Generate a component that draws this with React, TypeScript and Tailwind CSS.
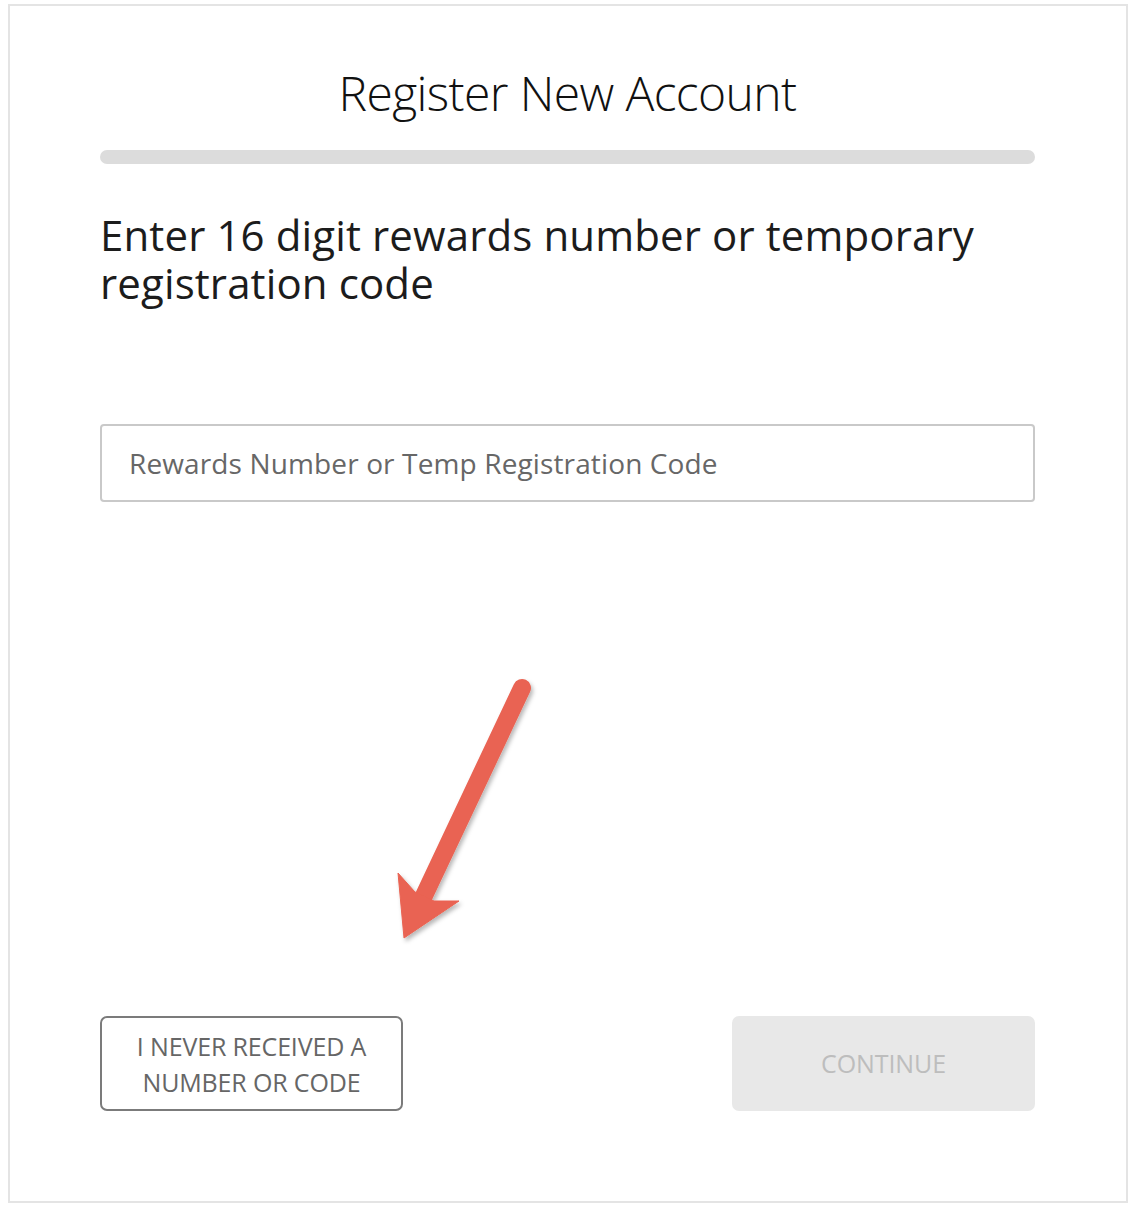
import React from "react";

const font = { fontFamily: '"Open Sans", "Noto Sans", sans-serif' };

function Arrow() {
  return (
    <svg
      className="absolute left-0 top-0 pointer-events-none"
      width={1134}
      height={1210}
      viewBox="0 0 1134 1210"
    >
      <defs>
        <filter id="arrowShadow" x="-20%" y="-20%" width="140%" height="140%">
          <feDropShadow dx="2" dy="3" stdDeviation="2" floodColor="#000" floodOpacity="0.28" />
        </filter>
      </defs>
      <g filter="url(#arrowShadow)" fill="#e96352" stroke="#e96352">
        <line x1="522" y1="688" x2="422" y2="900" strokeWidth="18" strokeLinecap="round" />
        <polygon
          points="398,873 415,892 434,901 459,901 404,938"
          strokeWidth="1"
          strokeLinejoin="miter"
        />
      </g>
    </svg>
  );
}

export default function App() {
  return (
    <div className="relative w-[1134px] h-[1210px] bg-white" style={font}>
      <div className="absolute left-[8px] top-[4px] w-[1120px] h-[1199px] border-2 border-[#e4e4e4] bg-white" />
      <div className="relative flex flex-col pl-[100px] pr-[99px] pt-[63px]">
        {/* Title */}
        <h1 className="text-center text-[#111] font-light text-[48px] leading-[60px] tracking-[-0.6px]">
          Register New Account
        </h1>

        {/* progress bar */}
        <div className="mt-[27px] h-[14px] w-full rounded-full bg-[#dcdcdc]" />

        <h2 className="mt-[47px] text-[#1c1c1c] font-medium text-[42px] leading-[48px] tracking-[0.12px]">
          Enter 16 digit rewards number or temporary registration code
        </h2>

        <div className="mt-[117px] flex h-[78px] items-center rounded-[4px] border-2 border-[#c9c9c9] pl-[27px]">
          <span className="text-[28px] text-[#676767] tracking-[0.13px]">
            Rewards Number or Temp Registration Code
          </span>
        </div>

        <div className="mt-[514px] flex justify-between">
          <button className="flex h-[95px] w-[303px] flex-col items-center justify-center rounded-[7px] border-2 border-[#7b7b7b] text-[25px] leading-[36px] text-[#666] tracking-[-0.15px]">
            <span>I NEVER RECEIVED A</span>
            <span>NUMBER OR CODE</span>
          </button>
          <button className="flex h-[95px] w-[303px] items-center justify-center rounded-[7px] bg-[#e8e8e8] text-[25px] text-[#bdbdbd] tracking-[-0.1px]">
            CONTINUE
          </button>
        </div>
      </div>
      <Arrow />
    </div>
  );
}
